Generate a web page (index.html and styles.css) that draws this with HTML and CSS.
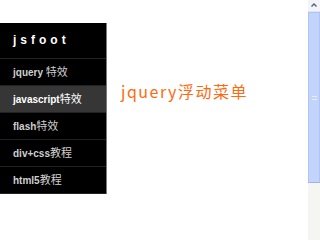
FILE: index.html
```html
<!DOCTYPE html>
<html>
<head>
<meta charset="utf-8">
<link rel="stylesheet" href="styles.css">
</head>
<body>
<div class="page">
  <div class="menu">
    <div class="menu-head">jsfoot</div>
    <div class="item">jquery <span class="cn">特效</span></div>
    <div class="item active">javascript<span class="cn">特效</span></div>
    <div class="item">flash<span class="cn">特效</span></div>
    <div class="item">div+css<span class="cn">教程</span></div>
    <div class="item">html5<span class="cn">教程</span></div>
  </div>
  <div class="title">jquery浮动菜单</div>
</div>
<div class="scrollbar">
  <div class="sb-btn"><svg width="12" height="11" viewBox="0 0 12 11"><path d="M3.5 6.5 L6 4 L8.5 6.5" fill="none" stroke="#4d6185" stroke-width="1.4"/></svg></div>
  <div class="sb-thumb"><div class="grip"></div></div>
  <div class="sb-track"></div>
</div>
</body>
</html>
```
FILE: styles.css
```css
html, body {
  margin: 0;
  padding: 0;
  height: 100%;
  background: #fff;
}
body {
  display: flex;
  font-family: "Liberation Sans", "Noto Sans CJK SC", sans-serif;
}
.page {
  flex: 1;
  display: flex;
  align-items: flex-start;
}
.menu {
  margin-top: 23px;
  width: 106px;
  background: #000;
  border-right: 1px solid #7a7a7a;
}
.menu-head {
  height: 35px;
  line-height: 35px;
  padding-left: 13px;
  color: #fff;
  font-weight: bold;
  font-size: 12px;
  letter-spacing: 4px;
  border-bottom: 1px solid #222;
}
.item {
  height: 26px;
  line-height: 27px;
  padding-left: 13px;
  color: #cfcfcf;
  font-weight: bold;
  font-size: 10px;
  border-bottom: 1px solid #222;
  white-space: nowrap;
}
.item .cn {
  font-size: 11px;
  font-weight: normal;
}
.item.active {
  background: #363636;
  color: #fff;
}
.title {
  margin-top: 81px;
  margin-left: 14px;
  color: #ff6a10;
  font-size: 16px;
  line-height: 20px;
  letter-spacing: 1.5px;
  font-family: "Noto Sans CJK SC", sans-serif;
  white-space: nowrap;
}
.scrollbar {
  width: 12px;
  display: flex;
  flex-direction: column;
  background: #f5f5f1;
}
.sb-btn {
  height: 11px;
  background: #f3f4f8;
  border-bottom: 1px solid #dfe5f2;
}
.sb-btn svg {
  display: block;
}
.sb-thumb {
  height: 171px;
  background: #c2d4fc;
  border: 1px solid #b0c4f2;
  border-bottom-color: #9db2e6;
  box-sizing: border-box;
  display: flex;
  align-items: center;
  justify-content: center;
}
.grip {
  width: 5px;
  height: 4px;
  border-top: 1px solid #e8eefe;
  border-bottom: 1px solid #e8eefe;
  box-sizing: border-box;
}
.sb-track {
  flex: 1;
  background: #f5f5f1;
}
```
